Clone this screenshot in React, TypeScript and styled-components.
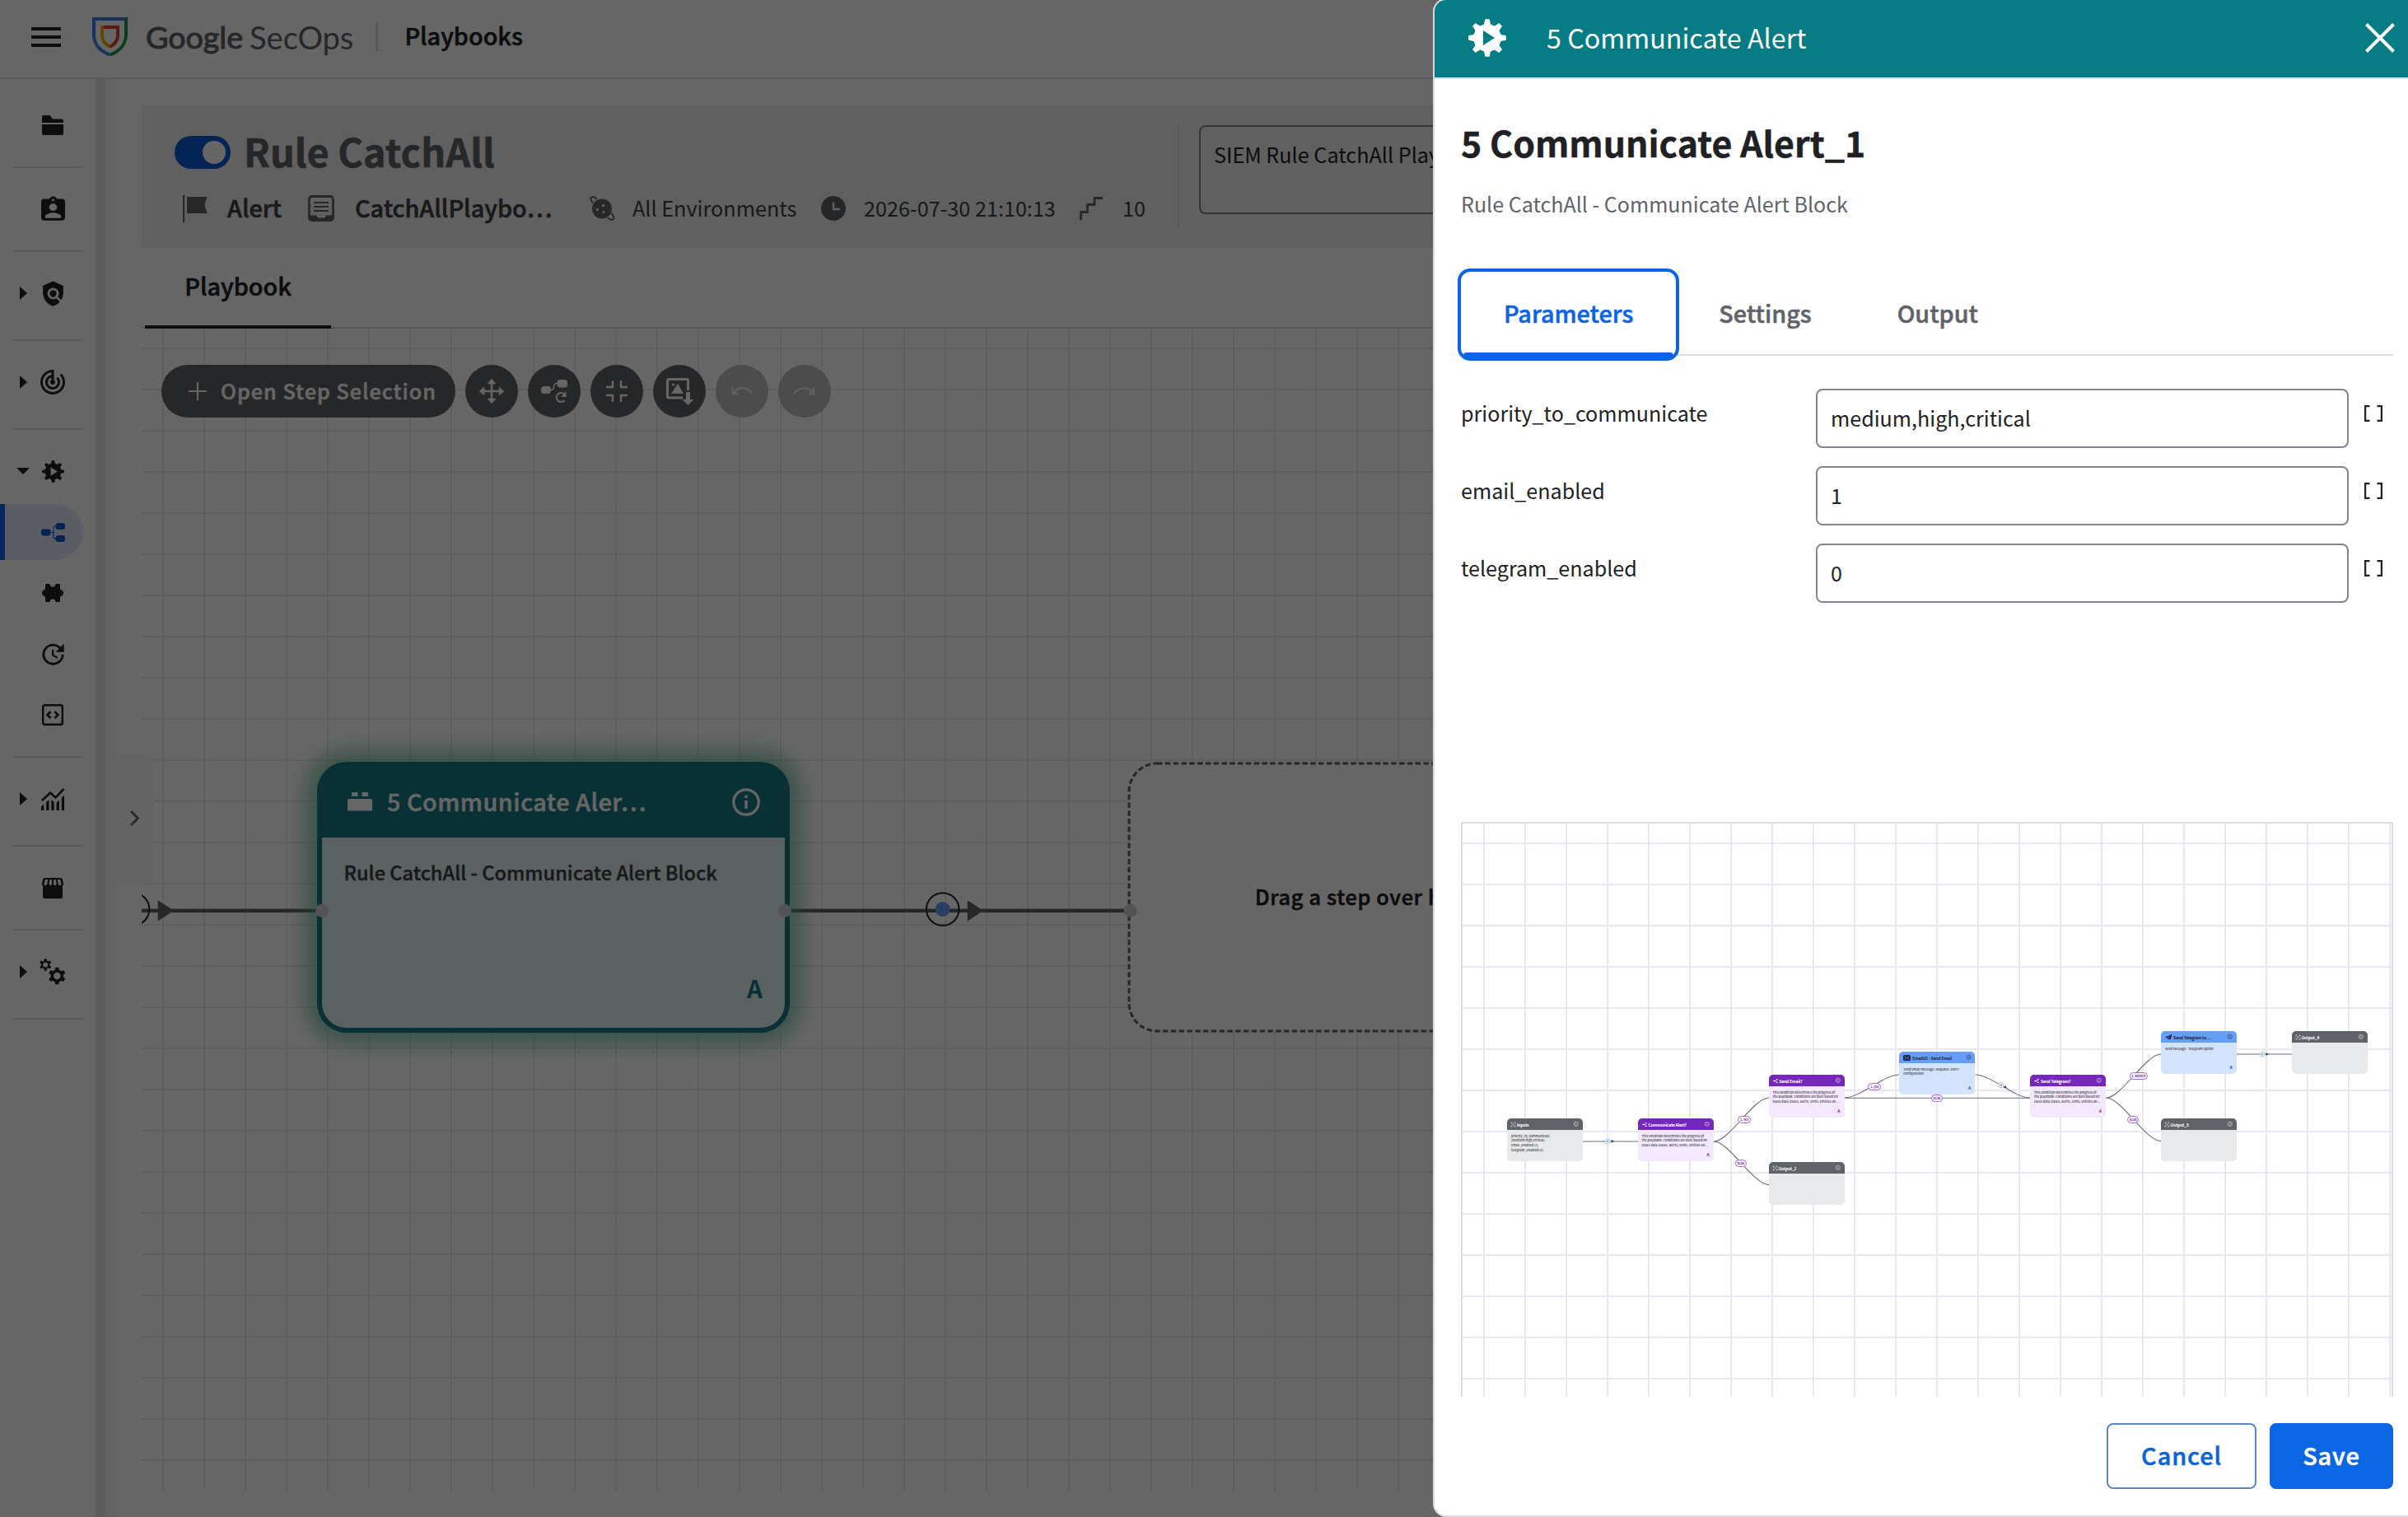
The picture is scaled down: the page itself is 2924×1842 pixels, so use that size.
import React from 'react';
import styled, { createGlobalStyle } from 'styled-components';
import { MdAssignmentInd, MdPolicy, MdTrackChanges, MdUpdate } from 'react-icons/md';

const FONT = '"Noto Sans CJK SC", "Noto Sans", sans-serif';

const GlobalStyle = createGlobalStyle`
  * { box-sizing: border-box; }
  body { margin: 0; background: #fff; font-family: ${FONT}; overflow: hidden; }
  svg { display: block; flex: none; overflow: visible; }
`;

/* ---------- shell ---------- */
const Page = styled.div`
  position: relative;
  display: flex;
  flex-direction: column;
  width: 2924px;
  height: 1842px;
  overflow: hidden;
  color: #202124;
`;
const TopBar = styled.header`
  display: flex;
  align-items: center;
  height: 96px;
  padding: 0 0 5px 38px;
  border-bottom: 2px solid #dadce0;
`;
const Brand = styled.div`
  display: flex;
  align-items: center;
  margin-left: 38px;
`;
const BrandWord = styled.span<{ $heavy?: boolean; $size: number }>`
  font-family: Lato, sans-serif;
  font-size: ${p => p.$size}px;
  line-height: 48px;
  color: #5f6368;
  margin-left: ${p => (p.$heavy ? 22 : 8)}px;
  -webkit-text-stroke: ${p => (p.$heavy ? 1 : 0)}px #5f6368;
`;
const Divider = styled.div`
  width: 3px;
  height: 36px;
  margin: 0 32px 0 27px;
  background: #dadce0;
`;
const PageName = styled.h1`
  margin: -3px 0 0;
  font-size: 28.8px;
  font-weight: 500;
  line-height: 44px;
  -webkit-text-stroke: 0.6px currentColor;
`;
const Columns = styled.div`
  display: flex;
  flex: 1;
  min-height: 0;
`;

/* ---------- sidebar ---------- */
const Sidebar = styled.nav`
  width: 116px;
`;
const Group = styled.div<{ $top?: number; $tail?: number }>`
  display: flex;
  flex-direction: column;
  gap: 6px;
  padding: ${p => p.$top ?? 16}px 0 ${p => p.$tail ?? 16}px;
  background: linear-gradient(#dadce0, #dadce0) 16px 100% / 84px 2px no-repeat;
  border-bottom: 2px solid transparent;
  background-origin: border-box;
`;
const NavItem = styled.div<{ $active?: boolean }>`
  display: grid;
  grid-template-columns: 20px 48px;
  column-gap: 2px;
  align-items: center;
  justify-items: center;
  width: 101px;
  height: 68px;
  padding-left: ${p => (p.$active ? 12 : 18)}px;
  color: ${p => (p.$active ? '#0b57d0' : '#202124')};
  background: ${p => (p.$active ? '#e1e8fa' : 'transparent')};
  border-left: ${p => (p.$active ? '6px solid #0b63e5' : '0')};
  border-radius: 0 34px 34px 0;
`;
const Wide = styled.span`
  display: block;
  transform: scaleX(1.1);
`;
const SideShade = styled.div`
  width: 24px;
  background: linear-gradient(90deg, #dcdcdc, #f0f0f0 45%, #fafafa);
`;

/* ---------- main ---------- */
const Main = styled.main`
  position: relative;
  display: flex;
  flex-direction: column;
  flex: 1;
  padding: 32px 0 31px 32px;
`;
const InfoCard = styled.section`
  display: flex;
  height: 173px;
  padding: 24px 0 0 40px;
  background: #f1f1f1;
`;
const InfoLeft = styled.div`
  width: 1220px;
  height: 125px;
  border-right: 2px solid #dadce0;
`;
const TitleRow = styled.div`
  display: flex;
  align-items: center;
  height: 66px;
`;
const Toggle = styled.div`
  display: flex;
  align-items: center;
  justify-content: flex-end;
  width: 68px;
  height: 40px;
  padding-right: 6px;
  border-radius: 20px;
  background: #0b5bd8;
`;
const Knob = styled.div`
  width: 28px;
  height: 28px;
  border-radius: 50%;
  background: #fff;
`;
const RuleTitle = styled.h2`
  margin: -5px 0 0 16px;
  font-size: 46.8px;
  line-height: 60px;
  font-weight: 700;
  color: #5f6368;
  -webkit-text-stroke: 0.6px currentColor;
`;
const MetaRow = styled.div`
  display: grid;
  grid-template-columns: 53px 99px 56px 286px 51px 230px 51px 263px 51px auto;
  align-items: center;
  height: 70px;
  padding-left: 10px;
  color: #5f6368;
`;
const MetaText = styled.span<{ $strong?: boolean }>`
  margin: -2px 0 0 1px;
  font-size: ${p => (p.$strong ? 28.8 : 25.2)}px;
  font-weight: ${p => (p.$strong ? 500 : 400)};
  line-height: 40px;
  color: #3c4043;
  white-space: nowrap;
  -webkit-text-stroke: ${p => (p.$strong ? 0.6 : 0)}px currentColor;
`;
const Description = styled.div`
  width: 900px;
  height: 108px;
  margin-left: 24px;
  padding: 15px 16px;
  border: 2px solid #80868b;
  border-radius: 8px;
  font-size: 25.2px;
  line-height: 36px;
  white-space: nowrap;
`;
const MainTabs = styled.div`
  display: flex;
  height: 98px;
  padding-left: 4px;
  border-bottom: 2px solid #dadce0;
`;
const MainTab = styled.div`
  display: flex;
  justify-content: center;
  width: 226px;
  height: 98px;
  padding-top: 25px;
  font-size: 28.8px;
  line-height: 42px;
  font-weight: 500;
  -webkit-text-stroke: 0.6px currentColor;
  background: linear-gradient(#202124, #202124) 0 100% / 100% 4px no-repeat;
`;
const Canvas = styled.div`
  position: relative;
  flex: 1;
  overflow: hidden;
  background-image: linear-gradient(90deg, #ebebef 2px, transparent 2px), linear-gradient(#ebebef 2px, transparent 2px);
  background-size: 50px 50px;
  background-position: 25px 23px;
`;
const CanvasLayer = styled.svg`
  position: absolute;
  inset: 0;
`;
const Toolbar = styled.div`
  position: relative;
  display: flex;
  gap: 12px;
  padding: 44px 0 0 24px;
`;
const StepButton = styled.button`
  display: flex;
  align-items: center;
  width: 357px;
  height: 64px;
  padding: 0 0 0 33px;
  gap: 17px;
  border: 0;
  border-radius: 32px;
  background: #5f6368;
  color: #fff;
`;
const StepButtonText = styled.span`
  margin-top: -2px;
  font: 500 25.2px/36px ${FONT};
  letter-spacing: 1px;
  white-space: nowrap;
  -webkit-text-stroke: 0.5px currentColor;
`;
const RoundButton = styled.button<{ $off?: boolean }>`
  display: grid;
  place-items: center;
  width: 64px;
  height: 64px;
  padding: 0;
  border: 0;
  border-radius: 50%;
  color: ${p => (p.$off ? '#eee' : '#fff')};
  background: ${p => (p.$off ? '#bdbdbd' : '#5f6368')};
`;
const Drawer = styled.div`
  position: absolute;
  left: 0;
  top: 819px;
  display: grid;
  place-items: center;
  width: 48px;
  height: 158px;
  padding: 0 1px 2px 0;
  border-radius: 0 14px 14px 0;
  background: #fafafa;
`;

/* ---------- large step card ---------- */
const StepCard = styled.article`
  position: absolute;
  left: 213px;
  top: 526px;
  width: 574px;
  height: 329px;
  border: 6px solid #147884;
  border-radius: 36px;
  background: #e1f6f3;
  box-shadow: 0 0 26px 13px rgba(72, 176, 136, 0.62);
`;
const StepHead = styled.div`
  display: flex;
  align-items: center;
  height: 86px;
  padding: 0 30px 0 31px;
  border-radius: 29px 29px 0 0;
  background: #147884;
  color: #fff;
  box-shadow: inset 0 1px 0 #2c8791;
`;
const StepName = styled.span`
  flex: 1;
  margin: -2px 0 0 18px;
  font-size: 28.8px;
  line-height: 44px;
  font-weight: 500;
  letter-spacing: 0.5px;
  white-space: nowrap;
  -webkit-text-stroke: 0.5px currentColor;
`;
const StepBody = styled.p`
  margin: 25px 0 0 26.5px;
  font-size: 23.6px;
  line-height: 34px;
  font-weight: 500;
  color: #3c4043;
  white-space: nowrap;
  -webkit-text-stroke: 0.4px currentColor;
`;
const StepMark = styled.div`
  margin: 102px 27px 0 0;
  text-align: right;
  font-size: 29.5px;
  line-height: 42px;
  font-weight: 700;
  color: #147884;
`;
const DropHint = styled.span`
  position: absolute;
  left: 1352px;
  top: 670px;
  font-size: 25.2px;
  line-height: 38px;
  font-weight: 500;
  letter-spacing: 0.7px;
  white-space: nowrap;
  -webkit-text-stroke: 0.6px currentColor;
`;

/* ---------- side panel ---------- */
const Scrim = styled.div`
  position: absolute;
  inset: 0;
  background: rgba(0, 0, 0, 0.6);
`;
const Panel = styled.aside`
  position: absolute;
  top: -2px;
  right: 0;
  bottom: 0;
  display: flex;
  flex-direction: column;
  width: 1184px;
  border: 2px solid #dadce0;
  border-right: 0;
  border-radius: 16px 0 0 16px;
  background: #fff;
  overflow: hidden;
`;
const PanelHead = styled.div`
  display: flex;
  align-items: center;
  height: 96px;
  padding: 0 16px 3px 41px;
  border-bottom: 2px solid #d5e3e6;
  background: #057b84;
  background-clip: padding-box;
  color: #fff;
`;
const PanelTitle = styled.span`
  flex: 1;
  margin: -2px 0 0 49px;
  font-size: 32.3px;
  line-height: 46px;
`;
const PanelBody = styled.div`
  display: flex;
  flex-direction: column;
  padding: 48px 18px 0 32px;
`;
const BlockName = styled.h2`
  margin: 0;
  font-size: 42.9px;
  line-height: 56px;
  font-weight: 700;
  -webkit-text-stroke: 0.4px currentColor;
`;
const BlockNote = styled.p`
  margin: 29px 0 0;
  font-size: 25.05px;
  line-height: 36px;
  color: #5f6368;
`;
const Tabs = styled.div`
  display: flex;
  height: 106px;
  margin-top: 61px;
  border-bottom: 2px solid #dadce0;
`;
const Tab = styled.div<{ $active?: boolean }>`
  position: relative;
  display: flex;
  align-items: center;
  height: 112px;
  padding: 0 52px 5px;
  font-size: 28.8px;
  font-weight: 500;
  line-height: 42px;
  -webkit-text-stroke: 0.5px currentColor;
  color: ${p => (p.$active ? '#0b63e5' : '#5f6368')};
  ${p =>
    p.$active &&
    `
    margin: 0 -4px;
    border: 4px solid #0b63e5;
    border-radius: 15px;
    background: #fff;
    &::after {
      content: '';
      position: absolute;
      left: 3px;
      right: 3px;
      bottom: 0;
      height: 6px;
      border-radius: 4px 4px 0 0;
      background: #0b63e5;
    }
  `}
`;
const Form = styled.div`
  display: flex;
  flex-direction: column;
  gap: 22px;
  margin-top: 40px;
`;
const Field = styled.label`
  display: grid;
  grid-template-columns: 431px 647px 22px;
  height: 72px;
`;
const FieldLabel = styled.span`
  padding-top: 11px;
  font-size: 25.1px;
  line-height: 36px;
`;
const Input = styled.input`
  width: 647px;
  height: 72px;
  padding: 0 16px 2px;
  border: 2px solid #80868b;
  border-radius: 8px;
  outline: 0;
  font: 400 25.1px/36px ${FONT};
  color: #202124;
`;
const BracketSlot = styled.div`
  padding: 20px 0 0 19px;
`;
const Preview = styled.div`
  position: relative;
  height: 698px;
  margin-top: 266px;
  border: 2px solid #dadce0;
  border-bottom: 0;
  background-image: linear-gradient(90deg, #e8e8f3 2px, transparent 2px), linear-gradient(#e8e8f3 2px, transparent 2px);
  background-size: 50px 50px;
  background-position: 25px 23px;
  overflow: hidden;
`;
const Footer = styled.div`
  display: flex;
  justify-content: flex-end;
  gap: 16px;
  margin-top: 32px;
`;
const Button = styled.button<{ $primary?: boolean }>`
  width: ${p => (p.$primary ? 150 : 182)}px;
  height: 80px;
  padding: 0 0 4px;
  border: 2px solid ${p => (p.$primary ? '#0b66e4' : '#5a86c8')};
  border-radius: 8px;
  background: ${p => (p.$primary ? '#0b66e4' : '#fff')};
  color: ${p => (p.$primary ? '#fff' : '#0b63d6')};
  font: 500 28.9px/42px ${FONT};
  letter-spacing: 0.9px;
  -webkit-text-stroke: 0.5px currentColor;
`;

/* ---------- preview nodes ---------- */
type Tone = 'gray' | 'purple' | 'blue';
const TONES: Record<Tone, { head: string; body: string; text: string; mark: string }> = {
  gray: { head: '#5f6368', body: '#e8e9eb', text: '#fff', mark: '#5f6368' },
  purple: { head: '#7627bb', body: '#f3e8fd', text: '#fff', mark: '#7627bb' },
  blue: { head: '#669df6', body: '#d2e3fc', text: '#202124', mark: '#1a4fb8' },
};
const MiniNode = styled.div<{ $x: number; $y: number; $tone: Tone }>`
  position: absolute;
  left: ${p => p.$x - 1776}px;
  top: ${p => p.$y - 1000}px;
  width: 92px;
  height: 52px;
  border-radius: 5px;
  overflow: hidden;
  background: ${p => TONES[p.$tone].body};
`;
const MiniHead = styled.div<{ $tone: Tone }>`
  display: flex;
  align-items: center;
  height: 14px;
  padding: 0 5px;
  background: ${p => TONES[p.$tone].head};
  color: ${p => TONES[p.$tone].text};
`;
const MiniTitle = styled.span`
  flex: 1;
  margin-left: 2px;
  font-size: 4.8px;
  line-height: 7px;
  font-weight: 500;
  white-space: nowrap;
  -webkit-text-stroke: 0.15px currentColor;
`;
const MiniBody = styled.div`
  padding: 4.6px 0 0 5px;
  font-size: 3.82px;
  line-height: 5.7px;
  font-weight: 500;
  color: #3c4043;
  white-space: pre;
`;
const MiniMark = styled.div<{ $tone: Tone }>`
  position: absolute;
  right: 5px;
  bottom: 5px;
  font-size: 5px;
  line-height: 7px;
  font-weight: 700;
  color: ${p => TONES[p.$tone].mark};
`;
const Badge = styled.div<{ $x: number; $y: number; $w: number }>`
  position: absolute;
  left: ${p => p.$x - p.$w / 2 - 1776}px;
  top: ${p => p.$y - 4.5 - 1000}px;
  display: grid;
  place-items: center;
  width: ${p => p.$w}px;
  height: 9px;
  border: 1px solid #a06bd0;
  border-radius: 4.5px;
  background: #fbf5ff;
  color: #7627bb;
  font-size: 3.6px;
  line-height: 5px;
  font-weight: 700;
  white-space: nowrap;
`;

/* ---------- icons ---------- */
function gearPath(cx: number, cy: number, outer: number, inner: number, teeth: number, base = 0.3, tip = 0.2) {
  const step = (Math.PI * 2) / teeth;
  const at = (r: number, a: number) => `${(cx + r * Math.sin(a)).toFixed(2)} ${(cy - r * Math.cos(a)).toFixed(2)}`;
  const pts: string[] = [];
  for (let i = 0; i < teeth; i++) {
    const a = i * step;
    pts.push(at(inner, a - step * base), at(outer, a - step * tip), at(outer, a + step * tip), at(inner, a + step * base));
  }
  return `M${pts.join('L')}Z`;
}
const GearPlay = ({ size }: { size: number }) => (
  <svg width={size} height={size} viewBox="0 0 46 46" fill="currentColor" fillRule="evenodd">
    <path d={`${gearPath(23, 23, 23, 17, 8, 0.3, 0.15)}M18 14V32L32 23Z`} />
  </svg>
);
const Menu = () => (
  <svg width="36" height="24" viewBox="0 0 36 24" fill="#202124">
    <path d="M0 0h36v4H0zM0 10h36v4H0zM0 20h36v4H0z" />
  </svg>
);
const Shield = () => (
  <svg width="43" height="48" viewBox="0 0 43 48" fill="none" strokeWidth="4">
    <path d="M21.5 45.5C9 41 2 32 2 21V2" stroke="#3b7ded" />
    <path d="M0 2H41" stroke="#3b7ded" />
    <path d="M41 0V21C41 32 34 41 21.5 45.5" stroke="#1e9c46" />
    <path d="M12 10V22C12 28 15.500 32.500 21.500 36" stroke="#f9ab00" />
    <path d="M14 12H31V22C31 28 27.500 32.500 21.500 36" stroke="#e8372b" />
  </svg>
);
const CaretRight = () => (
  <svg width="9" height="16" viewBox="0 0 9 16" fill="#202124"><path d="M0 0L9 8L0 16Z" /></svg>
);
const CaretDown = () => (
  <svg width="16" height="8" viewBox="0 0 16 8" fill="#202124"><path d="M0 0H16L8 8Z" /></svg>
);
const Folder = () => (
  <svg width="26" height="24" viewBox="0 0 26 24" fill="currentColor">
    <path d="M2 0H9.500L13 4.500H24Q26 4.500 26 6.500V9H0V2Q0 0 2 0ZM0 11H26V22Q26 24 24 24H2Q0 24 0 22Z" />
  </svg>
);
const FlowIcon = () => (
  <svg width="29" height="23" viewBox="0 0 29 23" fill="currentColor">
    <rect x="0" y="7.500" width="11.500" height="8" rx="3" />
    <rect x="17.500" y="0" width="11.500" height="8" rx="3" />
    <rect x="17.500" y="15" width="11.500" height="8" rx="3" />
    <path d="M11 11.500H15M18 4H17Q15 4 15 6V17Q15 19 17 19H18" fill="none" stroke="currentColor" strokeWidth="1.200" />
  </svg>
);
const Puzzle = () => (
  <svg width="26" height="22" viewBox="0 0 26 22" fill="currentColor">
    <path d="M4 1Q4 0 5 0H8.500Q9.300 0 9.600 1Q10.500 3.800 13 3.800Q15.500 3.800 16.400 1Q16.700 0 17.500 0H21Q22 0 22 1V6.500Q26 7.500 26 11Q26 14.500 22 15.500V21Q22 22 21 22H17.500Q16.700 22 16.400 21Q15.500 18.200 13 18.200Q10.500 18.200 9.600 21Q9.300 22 8.500 22H5Q4 22 4 21V15.500Q0 14.500 0 11Q0 7.500 4 6.500Z" />
  </svg>
);
const CodeBox = () => (
  <svg width="26" height="26" viewBox="0 0 26 26" fill="none" stroke="currentColor" strokeWidth="2.400">
    <rect x="1.200" y="1.200" width="23.600" height="23.600" rx="2" />
    <path d="M10.500 9L6.500 13L10.500 17M15.500 9L19.500 13L15.500 17" strokeWidth="2.600" />
  </svg>
);
const Trend = () => (
  <svg width="28" height="27" viewBox="0 0 28 27" fill="currentColor">
    <path d="M1 15L11 5.500L17.500 11.500L27.500 1" fill="none" stroke="currentColor" strokeWidth="2.600" />
    <path d="M0 22.500L3.200 19.500V27H0ZM6.200 17L9.400 14V27H6.200ZM12.400 14L15.600 17V27H12.400ZM18.600 17.500L21.800 14.500V27H18.600ZM24.800 11.500L28 8.500V27H24.800Z" />
  </svg>
);
const Store = () => (
  <svg width="26" height="25" viewBox="0 0 26 25">
    <path d="M3 0H23Q24.500 0 25 2L26 6.500Q26 9 25 10V23Q25 25 23 25H3Q1 25 1 23V10Q0 9 0 6.500L1 2Q1.500 0 3 0Z" fill="currentColor" />
    <path d="M4 2H7.200L6.200 7.500Q5.700 9 4.200 9Q2.300 9 2.500 7ZM9.300 2H12V7.500Q11.500 9 10.200 9Q8.300 9 8.500 7ZM14 2H16.700L17.500 7Q17.700 9 15.800 9Q14.500 9 14 7.500ZM18.800 2H22L23.500 7Q23.700 9 21.800 9Q20.300 9 19.800 7.500Z" fill="#fff" />
  </svg>
);
const Gears = () => (
  <svg width="32" height="32" viewBox="0 0 32 32" fill="currentColor" fillRule="evenodd">
    <path d={`${gearPath(7.2, 7.4, 7.4, 5.2, 6)}M7.200 4.400A3 3 0 1 0 7.200 10.400A3 3 0 1 0 7.200 4.400Z`} />
    <path d={`${gearPath(21.3, 21, 10.6, 7.8, 6)}M21.300 16.800A4.200 4.200 0 1 0 21.300 25.200A4.200 4.200 0 1 0 21.300 16.800Z`} />
  </svg>
);
const Flag = () => (
  <svg width="30" height="33" viewBox="0 0 30 33" fill="currentColor">
    <path d="M0 0H2.200V33H0ZM5 2H29.500L26.500 11.500L29.500 22H5Z" />
  </svg>
);
const Doc = () => (
  <svg width="32" height="32" viewBox="0 0 32 32" fill="none" stroke="currentColor" strokeWidth="2.800">
    <rect x="1.500" y="1.500" width="29" height="29" rx="3" />
    <path d="M7 9H25M7 14H25M7 19H25" strokeWidth="2.200" />
    <path d="M2 24.500H10L12 27.500H20L22 24.500H30V30H2Z" fill="currentColor" stroke="none" />
  </svg>
);
const Planet = () => (
  <svg width="31" height="30" viewBox="0 0 31 30">
    <circle cx="15" cy="15.500" r="12" fill="currentColor" />
    <path d="M4 8.500Q-1 2 3 1Q5.500 .5 9 3.500M22 26.500Q27 30.500 29 28Q30.500 26 26.500 21" fill="none" stroke="currentColor" strokeWidth="2" />
    <g fill="#f1f1f1"><circle cx="16.500" cy="11.500" r="1.800" /><circle cx="9.500" cy="16.500" r="1.700" /><circle cx="17" cy="19.500" r="1.600" /></g>
  </svg>
);
const Clock = () => (
  <svg width="30" height="30" viewBox="0 0 30 30">
    <circle cx="15" cy="15" r="15" fill="currentColor" />
    <path d="M15 7.500V16H23" fill="none" stroke="#f1f1f1" strokeWidth="2.400" />
  </svg>
);
const Stairs = () => (
  <svg width="28" height="28" viewBox="0 0 28 28" fill="none" stroke="currentColor" strokeWidth="2.800" strokeLinecap="round" strokeLinejoin="round">
    <path d="M1.500 27V18.500H9.500V9.500H18V1.500H27" />
  </svg>
);
const Plus = () => (
  <svg width="22" height="22" viewBox="0 0 22 22" stroke="currentColor" strokeWidth="2.200"><path d="M11 0V22M0 11H22" /></svg>
);
const Move = () => (
  <svg width="30" height="30" viewBox="0 0 30 30" fill="currentColor">
    <path d="M15 5V25M5 15H25" stroke="currentColor" strokeWidth="2.400" />
    <path d="M15 0L20 6H10ZM15 30L10 24H20ZM0 15L6 10V20ZM30 15L24 20V10Z" stroke="currentColor" strokeWidth=".6" strokeLinejoin="round" />
  </svg>
);
const Relayout = () => (
  <svg width="32" height="28" viewBox="0 0 32 28" fill="currentColor">
    <rect x="0" y="8" width="12" height="9" rx="3.500" />
    <rect x="19.500" y="0" width="12.500" height="9.500" rx="3.500" />
    <path d="M12 12.500Q15.500 12.500 15.500 8.500Q15.500 4.500 19.500 4.500" fill="none" stroke="currentColor" strokeWidth="1.500" />
    <path d="M28 17.500A5.500 5.500 0 1 0 28.500 25" fill="none" stroke="currentColor" strokeWidth="2" />
    <path d="M30.500 14V21H24Z" />
  </svg>
);
const Collapse = () => (
  <svg width="26" height="26" viewBox="0 0 26 26" fill="none" stroke="currentColor" strokeWidth="2.400">
    <path d="M8 0V8H0M18 0V8H26M8 26V18H0M18 26V18H26" />
  </svg>
);
const SaveImage = () => (
  <svg width="33" height="33" viewBox="0 0 33 33" fill="currentColor">
    <path d="M20 24H3Q1.500 24 1.500 22.500V3Q1.500 1.500 3 1.500H25Q26.500 1.500 26.500 3V15" fill="none" stroke="currentColor" strokeWidth="3" />
    <path d="M6 19L14 7L21 19Z" />
    <circle cx="8.500" cy="8" r="1.600" />
    <path d="M24 17H29V26H33.500L26.500 33L19.500 26H24Z" />
  </svg>
);
const Undo = ({ flip }: { flip?: boolean }) => (
  <svg width="28" height="12" viewBox="0 0 28 12" transform={flip ? 'scale(-1 1)' : undefined}>
    <path d="M4 7Q14 -3 26.500 8" fill="none" stroke="currentColor" strokeWidth="2.600" />
    <path d="M1.500 0V10.500H10Z" fill="currentColor" />
  </svg>
);
const ChevronRight = () => (
  <svg width="11" height="19" viewBox="0 0 11 19" fill="none" stroke="#5f6368" strokeWidth="2.800"><path d="M1 1L9.500 9.500L1 18" /></svg>
);
const Brick = () => (
  <svg width="30" height="24" viewBox="0 0 30 24" fill="currentColor">
    <path d="M5 0H12.500V5H5ZM17.500 0H25V5H17.500ZM2 8H28Q30 8 30 10V22.500H0V10Q0 8 2 8Z" />
  </svg>
);
const Info = ({ size }: { size: number }) => (
  <svg width={size} height={size} viewBox="0 0 34 34" fill="none" stroke="currentColor">
    <circle cx="17" cy="17" r="15.200" strokeWidth="3.200" />
    <path d="M17 15V25M17 8.500V12" strokeWidth="3.400" />
  </svg>
);
const Close = () => (
  <svg width="36" height="34" viewBox="0 0 36 34" stroke="currentColor" strokeWidth="4"><path d="M1.500 .5L34.500 33.500M34.500 .5L1.500 33.500" /></svg>
);
const Brackets = () => (
  <svg width="22" height="20" viewBox="0 0 22 20" fill="none" stroke="#202124" strokeWidth="2.200"><path d="M6.500 1.100H1.100V18.900H6.500M15.500 1.100H20.900V18.900H15.500" /></svg>
);

type Glyph = 'io' | 'branch' | 'mail' | 'plane';
const MiniGlyph = ({ kind }: { kind: Glyph }) => {
  if (kind === 'io')
    return (
      <svg width="5" height="5" viewBox="0 0 10 10" stroke="currentColor" strokeWidth="1.300" fill="none">
        <path d="M0 3V0H3M7 0H10V3M10 7V10H7M3 10H0V7M3 3L7 7M7 3L3 7" />
      </svg>
    );
  if (kind === 'branch')
    return (
      <svg width="6" height="5" viewBox="0 0 12 10" stroke="currentColor" strokeWidth="1.500" fill="none">
        <path d="M0 5H7M3.500 3L5.500 5L3.500 7M12 1H8V9H12" />
      </svg>
    );
  if (kind === 'mail')
    return (
      <svg width="9" height="7" viewBox="0 0 9 7">
        <rect width="9" height="7" rx="1.500" fill="#1c2a4a" />
        <path d="M1.500 1.500L4.500 4L7.500 1.500M1.500 5.800L3.500 3.500M7.500 5.800L5.500 3.500" stroke="#8fb8f8" strokeWidth=".6" fill="none" />
      </svg>
    );
  return (
    <svg width="8.500" height="7" viewBox="0 0 17 14" fill="#17233f"><path d="M17 0L0 7L5 9L14 3L7 10V14L9.500 11L13 12.500Z" /></svg>
  );
};

/* ---------- data ---------- */
const CONDITION = 'This condition determines the progress of\nthe playbook. Conditions are built based on\ncases data (cases, alerts, vents, entities an…';
type NodeSpec = { x: number; y: number; tone: Tone; glyph: Glyph; title: string; body?: string; mark?: boolean };
const NODES: NodeSpec[] = [
  { x: 1830, y: 1358, tone: 'gray', glyph: 'io', title: 'Inputs', body: 'priority_to_communicate\n(medium,high,critical)\nemail_enabled (1)\ntelegram_enabled (0)' },
  { x: 1988.6, y: 1358, tone: 'purple', glyph: 'branch', title: 'Communicate Alert?', body: CONDITION, mark: true },
  { x: 2147.5, y: 1305, tone: 'purple', glyph: 'branch', title: 'Send Email?', body: CONDITION, mark: true },
  { x: 2147.5, y: 1411, tone: 'gray', glyph: 'io', title: 'Output_2' },
  { x: 2306.3, y: 1277, tone: 'blue', glyph: 'mail', title: 'EmailV2 - Send Email', body: 'Send email message. Requires: SMTP\nconfiguration', mark: true },
  { x: 2465, y: 1305, tone: 'purple', glyph: 'branch', title: 'Send Telegram?', body: CONDITION, mark: true },
  { x: 2623.8, y: 1252, tone: 'blue', glyph: 'plane', title: 'Send Telegram to …', body: 'Send Message - Telegram Option', mark: true },
  { x: 2782.5, y: 1252, tone: 'gray', glyph: 'io', title: 'Output_4' },
  { x: 2623.8, y: 1358, tone: 'gray', glyph: 'io', title: 'Output_5' },
];
type Wire = [number, number, number, number];
const WIRES: Wire[] = [
  [1922, 1386, 1989, 1386],
  [2081, 1386, 2148, 1333],
  [2081, 1386, 2148, 1438.6],
  [2240, 1333, 2306, 1305],
  [2240, 1333.3, 2465, 1333.3],
  [2398.5, 1305, 2465, 1333],
  [2557.5, 1333, 2624, 1280],
  [2557.5, 1333, 2624, 1385.6],
  [2716, 1280, 2783, 1280],
];
const JOINTS: [number, number, number][] = [
  [1952.2, 1385.8, 0],
  [2429.8, 1317.7, 24],
  [2747, 1280, 0],
];
const BADGES: [number, number, number, string][] = [
  [2118, 1359.7, 16, '1. Yes'],
  [2114, 1412.7, 14, 'ELSE'],
  [2276.4, 1319.5, 16, '1. yes'],
  [2352.2, 1333.5, 14, 'ELSE'],
  [2596.7, 1306.8, 22, '1. Branch'],
  [2590.3, 1359.8, 14, 'ELSE'],
];
const FIELDS = [
  ['priority_to_communicate', 'medium,high,critical'],
  ['email_enabled', '1'],
  ['telegram_enabled', '0'],
];

const wirePath = ([x1, y1, x2, y2]: Wire) =>
  `M${x1} ${y1}C${x1 + (x2 - x1) * 0.28} ${y1} ${x2 - (x2 - x1) * 0.28} ${y2} ${x2} ${y2}`;

function FlowPreview() {
  return (
    <Preview>
      <CanvasLayer width="1128" height="696" viewBox="1776 1000 1128 696">
        {WIRES.map((w, i) => (
          <path key={i} d={wirePath(w)} fill="none" stroke="#6b6e72" strokeWidth="1.100" />
        ))}
        {JOINTS.map(([x, y, a], i) => (
          <g key={i} transform={`translate(${x} ${y}) rotate(${a})`}>
            <circle r="3.100" fill="#fff" stroke="#7d9cc4" strokeWidth=".6" />
            <circle r="1.500" fill="#85aef0" />
            <path d="M4.500 -2L7.800 0L4.500 2Z" fill="#3c4043" />
          </g>
        ))}
      </CanvasLayer>
      {NODES.map((n, i) => (
        <MiniNode key={i} $x={n.x} $y={n.y} $tone={n.tone}>
          <MiniHead $tone={n.tone}>
            <MiniGlyph kind={n.glyph} />
            <MiniTitle>{n.title}</MiniTitle>
            <Info size={5.6} />
          </MiniHead>
          {n.body && <MiniBody>{n.body}</MiniBody>}
          {n.mark && <MiniMark $tone={n.tone}>A</MiniMark>}
        </MiniNode>
      ))}
      {BADGES.map(([x, y, w, t], i) => (
        <Badge key={i} $x={x} $y={y} $w={w}>{t}</Badge>
      ))}
    </Preview>
  );
}

function WorkCanvas() {
  return (
    <Canvas>
      <CanvasLayer width="2752" height="1412" viewBox="172 399 2752 1412">
        <rect x="1371" y="927" width="574" height="325" rx="34" fill="#fff" stroke="#5f6368" strokeWidth="3" strokeDasharray="6.500 3.300" />
        <path d="M172 1105.800H391M952 1105.800H1372" stroke="#5f6368" strokeWidth="4.500" />
        <path d="M191.700 1093L211 1105.800L191.700 1118.500ZM1174.800 1093L1194 1105.800L1174.800 1118.500Z" fill="#5f6368" />
        <circle cx="161.500" cy="1104" r="19.800" fill="none" stroke="#202124" strokeWidth="2" />
        <circle cx="1144.700" cy="1104" r="19.800" fill="none" stroke="#202124" strokeWidth="2" />
        <circle cx="1144.700" cy="1104" r="9" fill="#669df6" />
      </CanvasLayer>
      <Toolbar>
        <StepButton><Plus /><StepButtonText>Open Step Selection</StepButtonText></StepButton>
        <RoundButton><Move /></RoundButton>
        <RoundButton><Relayout /></RoundButton>
        <RoundButton><Collapse /></RoundButton>
        <RoundButton><SaveImage /></RoundButton>
        <RoundButton $off><Undo /></RoundButton>
        <RoundButton $off><Undo flip /></RoundButton>
      </Toolbar>
      <StepCard>
        <StepHead>
          <Brick />
          <StepName>5 Communicate Aler…</StepName>
          <Info size={34} />
        </StepHead>
        <StepBody>Rule CatchAll - Communicate Alert Block</StepBody>
        <StepMark>A</StepMark>
      </StepCard>
      <CanvasLayer width="2752" height="1412" viewBox="172 399 2752 1412" fill="#cfcfcf">
        <circle cx="391" cy="1105.800" r="8" />
        <circle cx="953" cy="1105.800" r="8" />
        <circle cx="1372.500" cy="1105.800" r="8" />
      </CanvasLayer>
      <DropHint>Drag a step over here</DropHint>
    </Canvas>
  );
}

export default function App() {
  return (
    <>
      <GlobalStyle />
      <Page>
        <TopBar>
          <Menu />
          <Brand>
            <Shield />
            <BrandWord $heavy $size={37.6}>Google</BrandWord>
            <BrandWord $size={38.1}>SecOps</BrandWord>
          </Brand>
          <Divider />
          <PageName>Playbooks</PageName>
        </TopBar>
        <Columns>
          <Sidebar>
            <Group $top={22}><NavItem><span /><Folder /></NavItem></Group>
            <Group><NavItem><span /><Wide><MdAssignmentInd size={35} /></Wide></NavItem></Group>
            <Group $tail={22}><NavItem><CaretRight /><MdPolicy size={33} /></NavItem></Group>
            <Group $tail={22}><NavItem><CaretRight /><MdTrackChanges size={36} /></NavItem></Group>
            <Group>
              <NavItem><CaretDown /><GearPlay size={27} /></NavItem>
              <NavItem $active><span /><FlowIcon /></NavItem>
              <NavItem><span /><Puzzle /></NavItem>
              <NavItem><span /><MdUpdate size={35} /></NavItem>
              <NavItem><span /><CodeBox /></NavItem>
            </Group>
            <Group $tail={22}><NavItem><CaretRight /><Trend /></NavItem></Group>
            <Group><NavItem><span /><Store /></NavItem></Group>
            <Group $tail={22}><NavItem><CaretRight /><Gears /></NavItem></Group>
          </Sidebar>
          <SideShade />
          <Main>
            <InfoCard>
              <InfoLeft>
                <TitleRow>
                  <Toggle><Knob /></Toggle>
                  <RuleTitle>Rule CatchAll</RuleTitle>
                </TitleRow>
                <MetaRow>
                  <Flag /><MetaText $strong>Alert</MetaText>
                  <Doc /><MetaText $strong>CatchAllPlaybo…</MetaText>
                  <Planet /><MetaText>All Environments</MetaText>
                  <Clock /><MetaText>2026-07-30 21:10:13</MetaText>
                  <Stairs /><MetaText>10</MetaText>
                </MetaRow>
              </InfoLeft>
              <Description>SIEM Rule CatchAll Playbook</Description>
            </InfoCard>
            <MainTabs><MainTab>Playbook</MainTab></MainTabs>
            <WorkCanvas />
            <Drawer><ChevronRight /></Drawer>
          </Main>
        </Columns>
        <Scrim />
        <Panel>
          <PanelHead>
            <GearPlay size={46} />
            <PanelTitle>5 Communicate Alert</PanelTitle>
            <Close />
          </PanelHead>
          <PanelBody>
            <BlockName>5 Communicate Alert_1</BlockName>
            <BlockNote>Rule CatchAll - Communicate Alert Block</BlockNote>
            <Tabs>
              <Tab $active>Parameters</Tab>
              <Tab>Settings</Tab>
              <Tab>Output</Tab>
            </Tabs>
            <Form>
              {FIELDS.map(([name, value]) => (
                <Field key={name}>
                  <FieldLabel>{name}</FieldLabel>
                  <Input defaultValue={value} />
                  <BracketSlot><Brackets /></BracketSlot>
                </Field>
              ))}
            </Form>
            <FlowPreview />
            <Footer>
              <Button>Cancel</Button>
              <Button $primary>Save</Button>
            </Footer>
          </PanelBody>
        </Panel>
      </Page>
    </>
  );
}
